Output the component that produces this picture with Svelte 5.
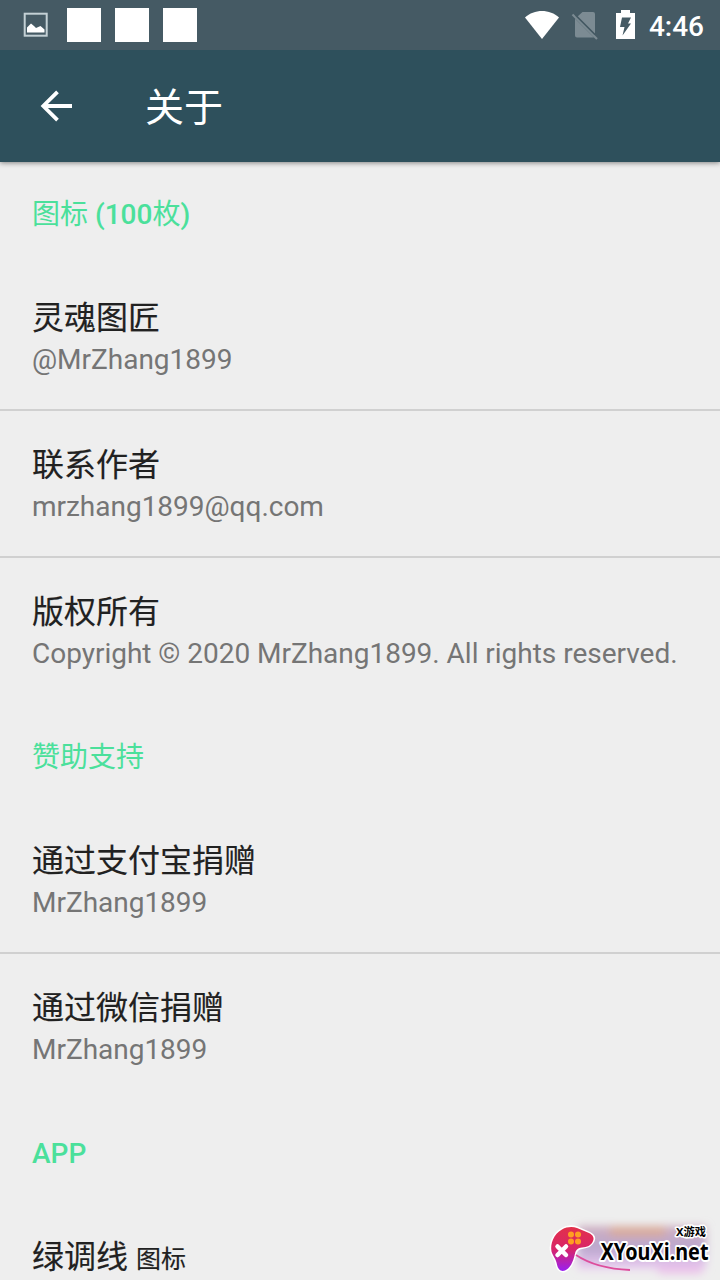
<script>
  const notifications = [1, 2, 3];

  const sections = [
    {
      title: '图标 (100枚)',
      items: [
        { title: '灵魂图匠', summary: '@MrZhang1899' },
        { title: '联系作者', summary: 'mrzhang1899@qq.com' },
        { title: '版权所有', summary: 'Copyright © 2020 MrZhang1899. All rights reserved.' },
      ],
    },
    {
      title: '赞助支持',
      items: [
        { title: '通过支付宝捐赠', summary: 'MrZhang1899' },
        { title: '通过微信捐赠', summary: 'MrZhang1899' },
      ],
    },
    {
      title: 'APP',
      items: [{ title: '绿调线', suffix: '图标' }],
    },
  ];

  // only the latin runs of a heading are medium weight
  function runs(text) {
    return text
      .split(/([\u4e00-\u9fff]+)/)
      .filter(Boolean)
      .map((t) => ({ text: t, latin: !/[\u4e00-\u9fff]/.test(t) }));
  }
</script>

<div class="screen">
  <div class="status">
    <svg class="picture" width="26" height="26" viewBox="0 0 26 26">
      <rect x="1.7" y="1.7" width="22" height="22" fill="none" stroke="#c3d0d5" stroke-width="2" />
      <path d="M4 20.500v-5l4-4 3 2.500 2 2 4.500-2 4 3.500v3z" fill="#fff" />
    </svg>
    {#each notifications as n (n)}
      <span class="square"></span>
    {/each}
    <span class="spacer"></span>
    <svg class="wifi" width="36" height="30" viewBox="0 0 36 30">
      <path d="M1 7.500C10-1.300 26-1.300 35 7.500L18 29z" fill="#fff" />
    </svg>
    <svg class="sim" width="28" height="30" viewBox="0 0 28 30">
      <path d="M11.500 2H22q2 0 2 2v20L6.500 6.500zM4 8.500L23 27.500H6q-2 0-2-2z" fill="#7c8b93" />
      <path d="M1.500 4.500L26 29" stroke="#7c8b93" stroke-width="2.200" />
      <path d="M4.500 5L24 24.500" stroke="#455a64" stroke-width="1.500" />
    </svg>
    <svg class="battery" width="20" height="30" viewBox="0 0 20 30">
      <path d="M5 0h9v3h5v26H0V3h5z" fill="#fff" />
      <path d="M6 7.500h9l-3 6h3L6.500 25.500 8.500 17H4z" fill="#455a64" />
    </svg>
    <span class="time">4:46</span>
  </div>

  <header>
    <svg width="34" height="34" viewBox="0 0 34 34">
      <path d="M33 17H4M18.500 2.800L4.300 17l14.200 14.200" fill="none" stroke="#fff" stroke-width="3.800" />
    </svg>
    <h1>关于</h1>
  </header>

  <main>
    {#each sections as section}
      <section>
        <h2>{#each runs(section.title) as run}<span class:latin={run.latin}>{run.text}</span>{/each}</h2>
        {#each section.items as item}
          <div class="item">
            <div class="title">
              {item.title}
              {#if item.suffix}<small>{item.suffix}</small>{/if}
            </div>
            {#if item.summary}
              <div class="summary">{item.summary}</div>
            {/if}
          </div>
        {/each}
      </section>
    {/each}
  </main>

  <div class="badge">
    <svg width="172" height="66" viewBox="0 0 172 66">
      <defs>
        <linearGradient id="pad" x1="0" y1="0" x2="0" y2="1">
          <stop offset="0" stop-color="#e2304a" />
          <stop offset="0.5" stop-color="#d92568" />
          <stop offset="1" stop-color="#9a1ff0" />
        </linearGradient>
        <linearGradient id="glow" x1="0" y1="0" x2="0" y2="1">
          <stop offset="0" stop-color="#cba5b8" />
          <stop offset="0.500" stop-color="#b09ac8" />
          <stop offset="1" stop-color="#edc6f3" />
        </linearGradient>
        <filter id="soft" x="-20%" y="-40%" width="140%" height="180%">
          <feGaussianBlur stdDeviation="4" />
        </filter>
      </defs>
      <g filter="url(#soft)">
        <rect x="30" y="12" width="128" height="43" fill="url(#glow)" opacity="0.850" />
        <rect x="62" y="13" width="55" height="9" fill="#deaa8c" opacity="0.800" />
        <rect x="110" y="54" width="44" height="5" fill="#e9a0e4" opacity="0.700" />
      </g>
      <path
        d="M14 15.500c5-3 11-3 15-1.500l12 5c4 2 5.500 5 4 8-2 5-6 6-11 6.500-4 .5-6 2-7 6-2 9-5 15-10 17-4 1.500-7-1-8-6-1-6-4-8-5.500-13C2 30 5.500 20 14 15.500z"
        fill="url(#pad)"
        stroke="#fff"
        stroke-width="3"
        paint-order="stroke"
      />
      <path d="M28 41c12 8 30 14 54 15" fill="none" stroke="#dd4d9c" stroke-width="1.800" />
      <path d="M9.500 32.500l8.500 8.500m0-8.500l-8.500 8.500" stroke="#fff" stroke-width="4.500" stroke-linecap="round" />
      <g fill="#ff9f22">
        <circle cx="23" cy="20.500" r="3" />
        <circle cx="30" cy="20.500" r="3" />
        <circle cx="23" cy="27.500" r="3" />
        <circle cx="30" cy="27.500" r="3" />
      </g>
      <text class="brand-small" x="128" y="22" textLength="30" lengthAdjust="spacingAndGlyphs">X游戏</text>
      <text class="brand" x="52.500" y="46" textLength="108" lengthAdjust="spacingAndGlyphs">XYouXi.net</text>
    </svg>
  </div>
</div>

<style>
  :global(body) {
    background: #eee;
  }
  .screen {
    position: relative;
    width: 720px;
    height: 1280px;
    overflow: hidden;
    background: #eee;
    font-family: Roboto, 'Noto Sans CJK SC', sans-serif;
  }
  .status {
    display: flex;
    align-items: center;
    box-sizing: border-box;
    height: 50px;
    padding: 0 16px 0 23px;
    background: #455a64;
  }
  .picture {
    margin-right: 18px;
  }
  .square {
    width: 34px;
    height: 34px;
    margin-right: 14px;
    background: #fff;
  }
  .spacer {
    flex: 1;
  }
  .wifi {
    margin-right: 11px;
  }
  .sim {
    margin-right: 17px;
  }
  .battery {
    margin-right: 13px;
  }
  .time {
    margin-top: 2px;
    color: #fff;
    font-size: 28px;
    font-weight: 500;
  }
  header {
    position: relative;
    display: flex;
    align-items: center;
    height: 112px;
    padding-left: 39px;
    background: #2e505c;
    clip-path: inset(0 0 -12px);
    box-shadow: 0 1px 5px rgba(0, 0, 0, 0.45);
  }
  h1 {
    margin: 4px 0 0 72px;
    color: #fff;
    font-size: 39px;
    font-weight: 400;
    line-height: 56px;
  }
  h2 {
    box-sizing: border-box;
    height: 102px;
    margin: 0;
    padding: 33px 32px 0;
    color: #4be09b;
    font-size: 28px;
    font-weight: 400;
    line-height: 40px;
    white-space: pre;
  }
  .latin {
    font-weight: 500;
  }
  .item {
    box-sizing: border-box;
    height: 147px;
    padding: 33px 32px 0;
    border-bottom: 2px solid #d0d0d0;
  }
  .item:last-child {
    border-color: transparent;
  }
  .title {
    height: 43px;
    color: #212121;
    font-size: 32px;
    line-height: 42px;
    white-space: nowrap;
    -webkit-text-stroke: 0.15px;
  }
  small {
    font-size: 25px;
  }
  .summary {
    color: #757575;
    font-size: 28px;
    line-height: 40px;
    letter-spacing: -0.02px;
    white-space: nowrap;
  }
  .badge {
    position: absolute;
    right: 0;
    bottom: 0;
    height: 66px;
    width: 172px;
  }
  .brand,
  .brand-small {
    fill: #000;
    stroke: #fff;
    stroke-width: 4px;
    stroke-linejoin: round;
    paint-order: stroke;
    font-family: 'Noto Sans', 'Noto Sans CJK SC', sans-serif;
    font-weight: 700;
  }
  .brand {
    font-size: 24px;
  }
  .brand-small {
    font-size: 11px;
    stroke-width: 3px;
  }
</style>
